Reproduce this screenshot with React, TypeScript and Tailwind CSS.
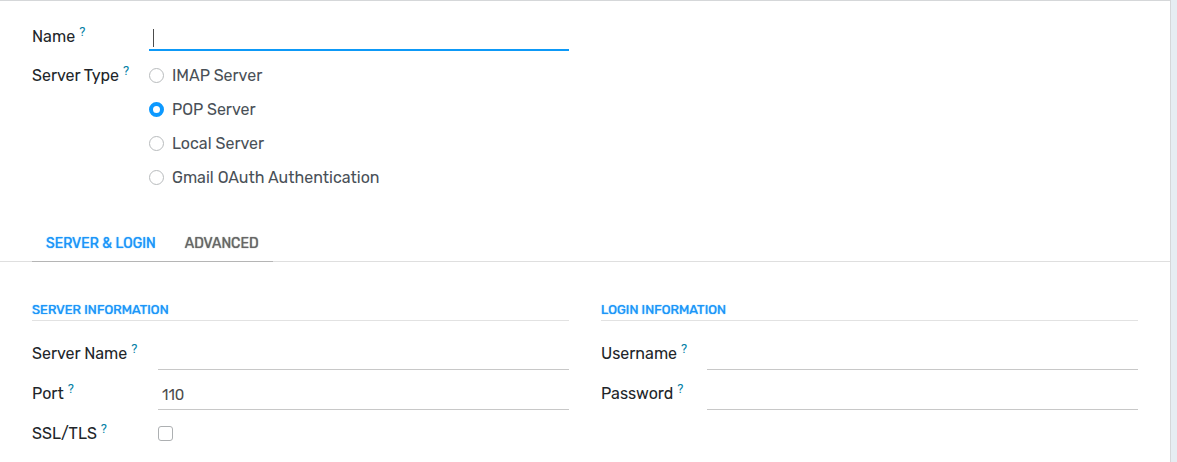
import { useState } from "react";
import type { ReactNode } from "react";

function Label({ id, children }: { id: string; children: ReactNode }) {
  return (
    <label htmlFor={id} className="flex h-6 items-center gap-1 whitespace-nowrap text-[#212529]">
      {children}
      <Help />
    </label>
  );
}

function Help() {
  return <span className="mb-[10px] font-[Roboto,sans-serif] text-[13px] leading-4 text-[#0180a5]">?</span>;
}

function Field({ id, label, type = "text", value = "", columns }: {
  id: string;
  label: string;
  type?: string;
  value?: string;
  columns: string;
}) {
  return (
    <div className={`grid h-10 items-center pt-2 ${columns}`}>
      <Label id={id}>{label}</Label>
      <input
        id={id}
        type={type}
        defaultValue={value}
        className="h-8 w-full self-end border-b border-[#c8c8c8] px-1 pt-[2px] text-[15px] text-[#4c4c4c] outline-none"
      />
    </div>
  );
}

function Heading({ children }: { children: ReactNode }) {
  return (
    <h2 className="mb-[9px] border-b border-[#e2e2e2] pt-[2px] text-[13px] leading-5 font-normal text-[#1b96f9] uppercase [text-shadow:0_0_1px_currentColor]">
      {children}
    </h2>
  );
}

const serverTypes = ["IMAP Server", "POP Server", "Local Server", "Gmail OAuth Authentication"];
const tabs = ["Server & Login", "Advanced"];

export default function App() {
  const [serverType, setServerType] = useState("POP Server");
  const [tab, setTab] = useState(tabs[0]);

  return (
    <div className="min-h-screen bg-[#e6edf2] pr-[6px] font-[Rubik,Roboto,sans-serif] text-base">
      <main className="min-h-screen border-t border-r border-[#d5d7d9] bg-white">
        <div className="grid grid-cols-2 gap-8 px-8 pt-5">
          <div>
            <div className="grid h-[30px] grid-cols-[117px_1fr] items-center">
              <div className="pt-[2px]">
                <Label id="name">Name</Label>
              </div>
              <div className="relative self-end">
                <input
                  id="name"
                  type="text"
                  className="block h-[30px] w-full border-b-2 border-[#0d99f7] px-1 text-[#4c4c4c] caret-transparent outline-none"
                />
                <span className="absolute top-2 left-1 h-[18px] w-px bg-[#4c4c4c]" />
              </div>
            </div>
            <div role="radiogroup" aria-labelledby="server-type" className="mt-2 grid grid-cols-[117px_1fr]">
              <div id="server-type" className="flex h-[34px] items-center gap-1 whitespace-nowrap text-[#212529]">
                Server Type
                <Help />
              </div>
              <div>
                {serverTypes.map((name) => (
                  <label key={name} className="flex h-[34px] items-center gap-2 text-[#495057]">
                    <input
                      type="radio"
                      name="server-type"
                      checked={serverType === name}
                      onChange={() => setServerType(name)}
                      className="mb-[2px] size-[15px] shrink-0 appearance-none rounded-full border border-[#b8bbbd] bg-white checked:border-4 checked:border-[#0d99ff]"
                    />
                    {name}
                  </label>
                ))}
              </div>
            </div>
          </div>
        </div>

        <div role="tablist" className="mt-7 flex border-b border-[#dfdfdf] px-8">
          <div className="-mb-px flex gap-px border-b border-[#b5b5b5]">
            {tabs.map((name) => (
              <button
                key={name}
                type="button"
                role="tab"
                aria-selected={tab === name}
                onClick={() => setTab(name)}
                className="h-[38px] px-[14px] pt-1 text-sm font-normal text-[#666666] uppercase [text-shadow:0_0_1px_currentColor] aria-selected:text-[#1b96f9]"
              >
                {name}
              </button>
            ))}
          </div>
        </div>

        <div className="grid grid-cols-2 gap-8 px-8 pt-9">
          <section>
            <Heading>Server Information</Heading>
            <Field id="server" label="Server Name" columns="grid-cols-[126px_1fr]" />
            <Field id="port" label="Port" value="110" columns="grid-cols-[126px_1fr]" />
            <div className="grid h-10 grid-cols-[126px_1fr] items-center pt-2">
              <Label id="ssl">SSL/TLS</Label>
              <input
                id="ssl"
                type="checkbox"
                className="mb-[2px] size-[15px] appearance-none rounded-[3px] border border-[#adb0b2] bg-white checked:bg-[#0d99ff]"
              />
            </div>
          </section>
          <section>
            <Heading>Login Information</Heading>
            <Field id="username" label="Username" columns="grid-cols-[106px_1fr]" />
            <Field id="password" label="Password" type="password" columns="grid-cols-[106px_1fr]" />
          </section>
        </div>
      </main>
    </div>
  );
}
